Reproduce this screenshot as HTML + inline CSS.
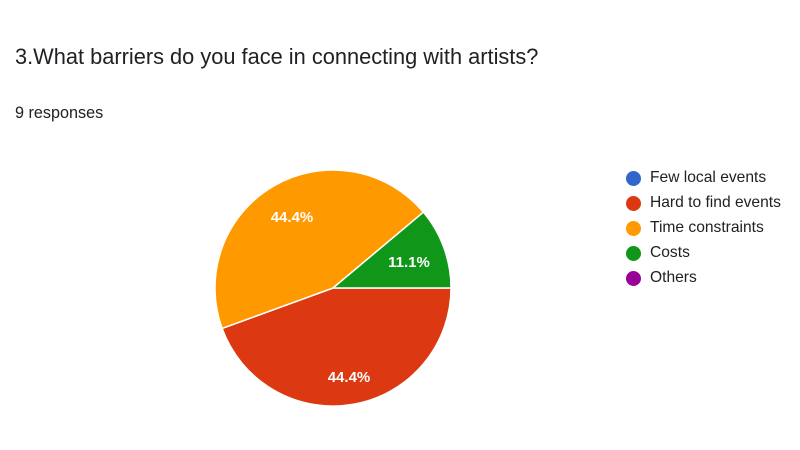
<!DOCTYPE html>
<html><head><meta charset="utf-8"><style>
html,body{margin:0;padding:0;width:800px;height:450px;background:#fff;overflow:hidden;font-family:"Liberation Sans",Arial,sans-serif;color:#202124}
.t{position:absolute;left:15px;top:44px;font-size:21.8px;}
.r{position:absolute;left:15px;top:104px;font-size:16.2px;}
.lg{position:absolute;left:626px;top:169px;font-size:15.6px;}
.lg div{height:25px;line-height:18px;position:relative;padding-left:24px}
.lg span{position:absolute;left:0;top:2px;width:15px;height:15px;border-radius:50%}
</style></head><body>
<div class="t">3.What barriers do you face in connecting with artists?</div>
<div class="r">9 responses</div>
<svg width="800" height="450" style="position:absolute;left:0;top:0">
<path d="M333 288 L451 288 A118 118 0 0 1 222.1 328.4 Z" fill="#dc3912" stroke="#fff" stroke-width="1.5"/>
<path d="M333 288 L222.1 328.4 A118 118 0 0 1 423.4 212.2 Z" fill="#ff9900" stroke="#fff" stroke-width="1.5"/>
<path d="M333 288 L423.4 212.2 A118 118 0 0 1 451 288 Z" fill="#109618" stroke="#fff" stroke-width="1.5"/>
<g font-family="Liberation Sans,Arial,sans-serif" font-size="15" font-weight="bold" fill="#fff" text-anchor="middle">
<text x="292" y="222">44.4%</text>
<text x="349" y="382">44.4%</text>
<text x="409" y="267">11.1%</text>
</g>
</svg>
<div class="lg">
<div><span style="background:#3366cc"></span>Few local events</div>
<div><span style="background:#dc3912"></span>Hard to find events</div>
<div><span style="background:#ff9900"></span>Time constraints</div>
<div><span style="background:#109618"></span>Costs</div>
<div><span style="background:#990099"></span>Others</div>
</div>
</body></html>
